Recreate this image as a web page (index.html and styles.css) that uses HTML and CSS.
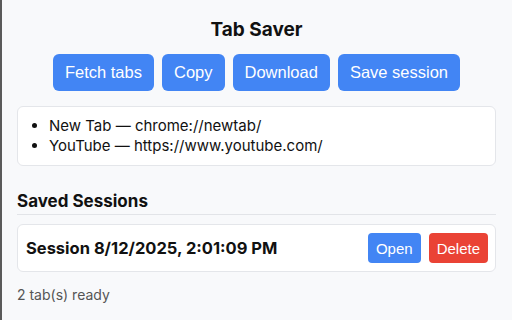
FILE: index.html
```html
<html>
<head>
    <title>Tab Saver</title>
    <link rel="stylesheet" href="styles.css">
</head>
<body>
    <h1 class="title">Tab Saver</h1>
    <div class="actions">
        <button class="btn" id="fetchBtn">Fetch tabs</button>
        <button class="btn" id="copyBtn">Copy</button>
        <button class="btn" id="downloadBtn">Download</button>
        <button class="btn" id="saveBtn">Save session</button>
    </div>
    <div class="tab-list">
        <ul>
            <li>New Tab — chrome://newtab/</li>
            <li>YouTube — https://www.youtube.com/</li>
        </ul>
    </div>

    <h2 class="section-title">Saved Sessions</h2>
    <div class="session">
        <div class="session-name">Session 8/12/2025, 2:01:09 PM</div>
        <div class="session-actions">
            <button class="btn small">Open</button>
            <button class="btn small danger">Delete</button>
        </div>
    </div>

    <div class="status" id="status">2 tab(s) ready</div>
</body>
</html>
```

FILE: styles.css
```css
body {
    margin: 0;
    padding: 12px 16px 0 15px;
    background-color: #f8f9fb;
    color: #111;
    font-family: Inter, "Noto Sans", sans-serif;
    border-left: 2px solid #5a5a5a;
    min-height: 100vh;
    box-sizing: border-box;
}

.title {
    font-size: 19px;
    font-weight: 700;
    text-align: center;
    margin: 6px 0 13px 0;
}

.actions {
    display: flex;
    justify-content: center;
    gap: 8px;
}

.btn {
    background-color: #4285f4;
    color: #ffffff;
    border: none;
    border-radius: 6px;
    font-family: "Liberation Sans", Arial, sans-serif;
    font-size: 16.5px;
    height: 37px;
    padding: 0 12px;
    cursor: pointer;
}

.btn.small {
    font-size: 15px;
    height: 30px;
    padding: 0 8px;
    border-radius: 4px;
}

.btn.danger {
    background-color: #ea4335;
}

.tab-list {
    margin-top: 15px;
    background-color: #ffffff;
    border: 1px solid #e4e6ea;
    border-radius: 6px;
    padding: 9px 0;
}

.tab-list ul {
    margin: 0;
    padding-left: 31px;
    font-size: 15px;
    line-height: 20px;
}

.section-title {
    font-size: 17px;
    font-weight: 700;
    margin: 25px 0 0 0;
    padding-bottom: 3px;
    border-bottom: 1px solid #e2e4e8;
}

.session {
    margin-top: 9px;
    background-color: #ffffff;
    border: 1px solid #e4e6ea;
    border-radius: 6px;
    height: 48px;
    box-sizing: border-box;
    padding: 0 7px 0 8px;
    display: flex;
    align-items: center;
    justify-content: space-between;
}

.session-name {
    font-size: 16.5px;
    font-weight: 700;
}

.session-actions {
    display: flex;
    gap: 8px;
}

.status {
    margin-top: 14px;
    font-size: 14px;
    color: #555;
}
```
